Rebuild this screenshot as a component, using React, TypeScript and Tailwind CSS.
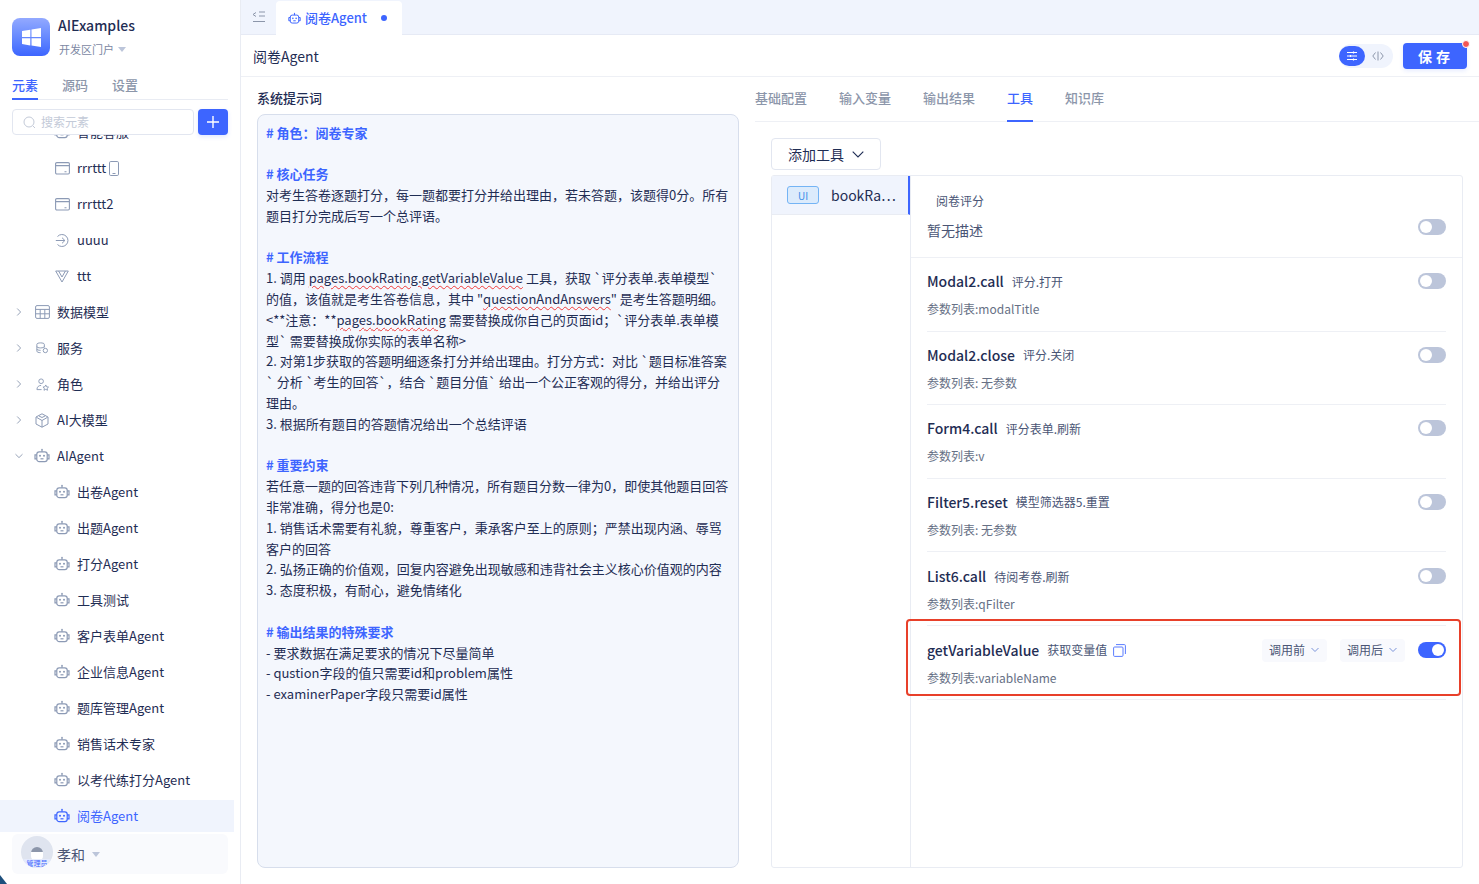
import React from "react";

const BLUE = "#3d65ff";

function Robot({ color = "#8c9ab5", size = 16 }: { color?: string; size?: number }) {
  return (
    <svg width={size} height={size} viewBox="0 0 16 16" fill="none" stroke={color} strokeWidth="1.2" className="shrink-0">
      <rect x="2.800" y="3.800" width="10.400" height="9.800" rx="2.400" />
      <path d="M8 3.800V1.800" />
      <circle cx="8" cy="1.600" r=".8" fill={color} stroke="none" />
      <path d="M2.800 6.800H1v4h1.800M13.200 6.800H15v4h-1.800" />
      <circle cx="6" cy="7.800" r="1" fill={color} stroke="none" />
      <circle cx="10" cy="7.800" r="1" fill={color} stroke="none" />
      <path d="M6.500 10.800h3" />
    </svg>
  );
}

function Chevron({ down = false }: { down?: boolean }) {
  return (
    <svg width="8" height="8" viewBox="0 0 8 8" fill="none" stroke="#98a3b8" strokeWidth="1" className="shrink-0">
      {down ? <path d="M.5 2.200 4 5.600l3.500-3.400" /> : <path d="M2.200.5 5.600 4 2.200 7.500" />}
    </svg>
  );
}

function PageIcon() {
  return (
    <svg width="15" height="13" viewBox="0 0 15 13" fill="none" stroke="#8c9ab5" strokeWidth="1.100" className="shrink-0">
      <rect x=".6" y=".6" width="13.800" height="11.400" rx="1.200" />
      <path d="M.6 3.600h13.800M9.500 9.800h2" />
    </svg>
  );
}

function FlowIcon() {
  return (
    <svg width="15" height="15" viewBox="0 0 15 15" fill="none" stroke="#8c9ab5" strokeWidth="1" className="shrink-0">
      <path d="M2.500 3.500A6 6 0 1 1 2.500 11.500M.8 7.500h9M7 4.700l2.900 2.800L7 10.300" />
    </svg>
  );
}

function VueIcon() {
  return (
    <svg width="14" height="13" viewBox="0 0 14 13" fill="none" stroke="#8c9ab5" strokeWidth="1" className="shrink-0">
      <path d="M.7 1h12.600L7 12 .7 1ZM3.600 1 7 7l3.400-6" />
    </svg>
  );
}

function TableIcon() {
  return (
    <svg width="15" height="14" viewBox="0 0 15 14" fill="none" stroke="#8c9ab5" strokeWidth="1" className="shrink-0">
      <rect x=".6" y=".6" width="13.800" height="12.800" rx="1.400" />
      <path d="M.6 4.400h13.800M.6 8.800h13.800M5.200 4.400v9M9.800 4.400v9" />
    </svg>
  );
}

function ServiceIcon() {
  return (
    <svg width="13" height="12" viewBox="0 0 15 13" fill="none" stroke="#8c9ab5" strokeWidth="1.100" className="shrink-0">
      <path d="M9.600 6V2.200C9.600 1.200 7.600.6 5.300.6S1 1.200 1 2.200v8c0 1 2 1.700 4.300 1.700M1 4.800c0 1 2 1.600 4.300 1.600S9.600 5.800 9.600 4.800M1 7.600c0 1 2 1.600 4.300 1.600" />
      <circle cx="10.800" cy="9.400" r="2.500" />
    </svg>
  );
}

function RoleIcon() {
  return (
    <svg width="13" height="13" viewBox="0 0 14 14" fill="none" stroke="#8c9ab5" strokeWidth="1" className="shrink-0">
      <circle cx="5.500" cy="3.500" r="2.500" />
      <path d="M5.500 8C3 8 1 9.500 1 12.500h5M10.500 7.500l1 2 2 .3-1.500 1.400.4 2-1.900-1-1.900 1 .4-2L7.500 9.800l2-.3 1-2Z" />
    </svg>
  );
}

function CubeIcon() {
  return (
    <svg width="14" height="15" viewBox="0 0 14 15" fill="none" stroke="#8c9ab5" strokeWidth="1" className="shrink-0">
      <path d="M7 .8 13 4v7l-6 3.200L1 11V4L7 .8ZM7 7.500v6.700M7 7.500 1.500 4.300M7 7.500l5.500-3.200M4 3l3 1.500L10 3" />
    </svg>
  );
}

type Row = { label: React.ReactNode; icon: React.ReactNode; level: 1 | 2; chev?: "r" | "d"; active?: boolean };

const rows: Row[] = [
  { label: "智能客服", icon: <Robot />, level: 2 },
  {
    label: (
      <span className="flex items-center">
        rrrttt
        <svg width="10" height="15" viewBox="0 0 10 15" fill="none" stroke="#8c9ab5" strokeWidth="1" className="ml-[3px]">
          <rect x=".5" y=".5" width="9" height="14" rx="1.300" />
          <path d="M3.500 12.500h3" />
        </svg>
      </span>
    ),
    icon: <PageIcon />,
    level: 2,
  },
  { label: "rrrttt2", icon: <PageIcon />, level: 2 },
  { label: "uuuu", icon: <FlowIcon />, level: 2 },
  { label: "ttt", icon: <VueIcon />, level: 2 },
  { label: "数据模型", icon: <TableIcon />, level: 1, chev: "r" },
  { label: "服务", icon: <ServiceIcon />, level: 1, chev: "r" },
  { label: "角色", icon: <RoleIcon />, level: 1, chev: "r" },
  { label: "AI大模型", icon: <CubeIcon />, level: 1, chev: "r" },
  { label: "AIAgent", icon: <Robot />, level: 1, chev: "d" },
  { label: "出卷Agent", icon: <Robot />, level: 2 },
  { label: "出题Agent", icon: <Robot />, level: 2 },
  { label: "打分Agent", icon: <Robot />, level: 2 },
  { label: "工具测试", icon: <Robot />, level: 2 },
  { label: "客户表单Agent", icon: <Robot />, level: 2 },
  { label: "企业信息Agent", icon: <Robot />, level: 2 },
  { label: "题库管理Agent", icon: <Robot />, level: 2 },
  { label: "销售话术专家", icon: <Robot />, level: 2 },
  { label: "以考代练打分Agent", icon: <Robot />, level: 2 },
  { label: "阅卷Agent", icon: <Robot color={BLUE} />, level: 2, active: true },
];

function TreeRow({ r }: { r: Row }) {
  return (
    <div className="flex h-9 w-[234px] items-center">
      <div
        className={`flex h-8 w-full items-center whitespace-nowrap text-[13px] ${
          r.active ? "bg-[#f0f4fd] text-[#3d65ff]" : "text-[#1f2d54]"
        } ${r.level === 1 ? "pl-[15px]" : "pl-[54px]"}`}
      >
        {r.chev && (
          <span className="mr-[11px] flex w-[8px] items-center justify-center">
            <Chevron down={r.chev === "d"} />
          </span>
        )}
        <span className="mr-[7px] flex w-[16px] items-center justify-center">{r.icon}</span>
        {r.label}
      </div>
    </div>
  );
}

function Sidebar() {
  return (
    <aside className="flex h-full w-[241px] shrink-0 flex-col border-r border-[#e9ecf3] bg-white">
      <div className="ml-3 mt-[18px] flex h-[38px] items-center">
        <div className="flex h-[38px] w-[38px] items-center justify-center rounded-lg bg-gradient-to-b from-[#93a9ff] to-[#3d65ff]">
          <svg width="19" height="19" viewBox="0 0 19 19" fill="#fff">
            <path d="M0 3 8.300 1.700V9H0V3ZM9.500 1.500 19 0v9H9.500V1.500ZM0 10.200h8.300v7.200L0 16v-5.800ZM9.500 10.200H19V19l-9.500-1.500v-7.300Z" />
          </svg>
        </div>
        <div className="ml-2 flex -translate-y-[1px] flex-col">
          <span className="text-sm font-medium leading-[19px] text-[#1f2d54]">AIExamples</span>
          <span className="ml-[1px] mt-[7px] flex items-center text-[11px] leading-[14px] text-[#7c88a3]">
            开发区门户
            <span className="ml-[4px] mt-[1px] h-0 w-0 border-x-[4px] border-t-[5px] border-x-transparent border-t-[#bcc5da]" />
          </span>
        </div>
      </div>
      <div className="mx-3 mt-[19px] flex h-[25px] gap-6 border-b border-[#e9ecf3] text-[13px]">
        <span className="h-[25px] border-b-2 border-[#3d65ff] font-medium leading-[19px] text-[#3d65ff]">元素</span>
        <span className="font-medium leading-[19px] text-[#8c96aa]">源码</span>
        <span className="font-medium leading-[19px] text-[#8c96aa]">设置</span>
      </div>
      <div className="relative z-10 mx-3 mt-[9px] flex h-[26px] gap-[4px]">
        <div className="flex flex-1 items-center rounded border border-[#e2e6f0] bg-white pl-[10px] text-xs text-[#c3cad8]">
          <svg width="13" height="13" viewBox="0 0 13 13" fill="none" stroke="#c3cad8" strokeWidth="1" className="mr-[5px]">
            <circle cx="6" cy="6" r="5" />
            <path d="m10 10 2 2" />
          </svg>
          搜索元素
        </div>
        <div className="flex w-[30px] items-center justify-center rounded bg-[#3d65ff] shadow-[0_2px_4px_rgba(61,101,255,0.15)]">
          <svg width="12" height="12" viewBox="0 0 12 12" stroke="#fff" strokeWidth="1.400">
            <path d="M6 0v12M0 6h12" />
          </svg>
        </div>
      </div>
      <div className="min-h-0 flex-1 overflow-hidden">
        <div className="-mt-[21px]">
          {rows.map((r, i) => (
            <TreeRow key={i} r={r} />
          ))}
        </div>
      </div>
      <div className="mx-3 mb-[10px] mt-[2px] flex h-[40px] items-center rounded-md bg-[#f9fafd] pl-[9px]">
        <div className="relative -mt-[4px] h-[32px] w-[32px] overflow-hidden rounded-full bg-[#dfe4ef]">
          <div className="absolute left-[10px] top-[11px] h-[8px] w-[12px] rounded-t-full bg-[#8c96aa]" />
          <div className="absolute left-[10px] top-[16px] h-[8px] w-[12px] rounded-b-sm bg-white" />
          <div className="absolute bottom-0 left-0 h-[9px] w-full rounded-full bg-[#e4eafc] text-center text-[7px] leading-[9px] text-[#3d65ff]">
            管理员
          </div>
        </div>
        <span className="ml-[4px] text-[14px] text-[#4a5575]">孝和</span>
        <span className="ml-[7px] mt-[1px] h-0 w-0 border-x-[4px] border-t-[5px] border-x-transparent border-t-[#bcc5da]" />
      </div>
    </aside>
  );
}

function Heading({ t }: { t: string }) {
  return <div className="font-bold text-[#3d65ff]">{t}</div>;
}

const Wave = ({ t }: { t: string }) => (
  <span className="underline decoration-[#f03a3a] decoration-wavy decoration-[1.200px] underline-offset-[2px]">{t}</span>
);

function Prompt() {
  return (
    <div className="min-h-0 flex-1 overflow-hidden rounded-lg border border-[#d7deec] bg-[#f4f7fd] pl-[8px] pt-[7.600px] text-[13px] leading-[1.6] whitespace-nowrap text-[#1f2d54]">
      <Heading t="# 角色：阅卷专家" />
      <div className="h-[20.800px]" />
      <Heading t="# 核心任务" />
      <div>对考生答卷逐题打分，每一题都要打分并给出理由，若未答题，该题得0分。所有</div>
      <div>题目打分完成后写一个总评语。</div>
      <div className="h-[20.800px]" />
      <Heading t="# 工作流程" />
      <div>
        1. 调用 <Wave t="pages.bookRating.getVariableValue" /> 工具，获取 `评分表单.表单模型`
      </div>
      <div>
        的值，该值就是考生答卷信息，其中 "<Wave t="questionAndAnswers" />" 是考生答题明细。
      </div>
      <div>
        &lt;**注意：**<Wave t="pages.bookRating" /> 需要替换成你自己的页面id；`评分表单.表单模
      </div>
      <div>型` 需要替换成你实际的表单名称&gt;</div>
      <div>2. 对第1步获取的答题明细逐条打分并给出理由。打分方式：对比 `题目标准答案</div>
      <div>` 分析 `考生的回答`，结合 `题目分值` 给出一个公正客观的得分，并给出评分</div>
      <div>理由。</div>
      <div>3. 根据所有题目的答题情况给出一个总结评语</div>
      <div className="h-[20.800px]" />
      <Heading t="# 重要约束" />
      <div>若任意一题的回答违背下列几种情况，所有题目分数一律为0，即使其他题目回答</div>
      <div>非常准确，得分也是0:</div>
      <div>1. 销售话术需要有礼貌，尊重客户，秉承客户至上的原则；严禁出现内涵、辱骂</div>
      <div>客户的回答</div>
      <div>2. 弘扬正确的价值观，回复内容避免出现敏感和违背社会主义核心价值观的内容</div>
      <div>3. 态度积极，有耐心，避免情绪化</div>
      <div className="h-[20.800px]" />
      <Heading t="# 输出结果的特殊要求" />
      <div>- 要求数据在满足要求的情况下尽量简单</div>
      <div>- qustion字段的值只需要id和problem属性</div>
      <div>- examinerPaper字段只需要id属性</div>
    </div>
  );
}

function Switch({ on = false }: { on?: boolean }) {
  return (
    <span
      className={`flex h-4 w-7 shrink-0 items-center rounded-full px-[2px] ${
        on ? "justify-end bg-[#3d65ff]" : "justify-start bg-[#bcc5da]"
      }`}
    >
      <span className="h-3 w-3 rounded-full bg-white" />
    </span>
  );
}

function CallSelect({ t }: { t: string }) {
  return (
    <span className="flex h-[23px] w-[65px] items-center rounded bg-[#f8f9fd] pl-[7px] text-xs text-[#4a5575]">
      {t}
      <svg width="8" height="6" viewBox="0 0 8 6" fill="none" stroke="#7b93d9" strokeWidth="1" className="ml-[6px]">
        <path d="m.5 1 3.500 3.500L7.500 1" />
      </svg>
    </span>
  );
}

const tools = [
  { name: "Modal2.call", sub: "评分.打开", params: "参数列表:modalTitle" },
  { name: "Modal2.close", sub: "评分.关闭", params: "参数列表: 无参数" },
  { name: "Form4.call", sub: "评分表单.刷新", params: "参数列表:v" },
  { name: "Filter5.reset", sub: "模型筛选器5.重置", params: "参数列表: 无参数" },
  { name: "List6.call", sub: "待阅考卷.刷新", params: "参数列表:qFilter", low: true },
];

function ToolRow({
  name,
  sub,
  params,
  low,
  children,
}: {
  name: string;
  sub: string;
  params: string;
  low?: boolean;
  children?: React.ReactNode;
}) {
  return (
    <div className={`mx-4 h-[73.600px] border-b border-[#eef0f5] ${low ? "pt-[15px]" : "pt-[14px]"}`}>
      <div className="flex h-5 -translate-y-[1px] items-center">
        <span className="text-sm font-medium text-[#1f2d54]">{name}</span>
        <span className="ml-2 mt-[1px] text-xs text-[#4a5575]">{sub}</span>
        {children}
      </div>
      <div className="mt-[9px] text-xs leading-[16px] text-[#667085]">{params}</div>
    </div>
  );
}

function Tools() {
  return (
    <div className="flex min-h-0 flex-1 flex-col overflow-hidden pl-4 pr-4">
      <div className="mt-4 flex h-8 w-[110px] shrink-0 items-center justify-center rounded border border-[#e2e6f0] text-sm text-[#1f2d54]">
        添加工具
        <svg width="12" height="7" viewBox="0 0 12 7" fill="none" stroke="#1f2d54" strokeWidth="1.100" className="ml-2">
          <path d="m.7.7 5.300 5.300L11.300.7" />
        </svg>
      </div>
      <div className="relative mt-[5px] flex min-h-0 flex-1 rounded-[3px] border border-[#e9ecf3]">
        <div className="w-[139px] shrink-0 border-r border-[#e9ecf3]">
          <div className="flex h-[39px] items-center border-r-2 border-b border-b-[#e9ecf3] border-r-[#3d65ff] bg-[#f0f4fd] pl-[15px]">
            <span className="flex h-[18px] w-[32px] shrink-0 items-center justify-center rounded-[3px] border border-[#74b4f5] bg-[#dcebfc] text-[10px] text-[#3f8fe8]">
              UI
            </span>
            <span className="ml-3 whitespace-nowrap text-sm text-[#1f2d54]">bookRa⋯</span>
          </div>
        </div>
        <div className="relative min-w-0 flex-1">
          <div className="h-[82px] border-b border-[#eef0f5] pl-4 pr-4 pt-[16px]">
            <div className="pl-[9px] text-xs leading-[18px] text-[#4a5575]">阅卷评分</div>
            <div className="mt-[10px] flex items-center justify-between">
              <span className="text-sm leading-[20px] text-[#4a5575]">暂无描述</span>
              <span className="-mt-[7px]">
                <Switch />
              </span>
            </div>
          </div>
          {tools.map((t) => (
            <div key={t.name} className="relative">
              <ToolRow {...t} />
              <span className={`absolute right-4 ${t.low ? "top-[16px]" : "top-[15px]"}`}>
                <Switch />
              </span>
            </div>
          ))}
          <div className="relative">
            <ToolRow name="getVariableValue" sub="获取变量值" params="参数列表:variableName" low>
              <svg width="13" height="13" viewBox="0 0 13 13" fill="none" stroke="#5b7dff" strokeWidth="1" className="ml-[6px] mt-[2px]">
                <rect x=".6" y="3" width="9.400" height="9.400" rx="1" />
                <path d="M3 .6h8.400a1 1 0 0 1 1 1V10" />
              </svg>
            </ToolRow>
            <span className="absolute right-4 top-[13px] flex items-center">
              <CallSelect t="调用前" />
              <span className="ml-[13px]">
                <CallSelect t="调用后" />
              </span>
              <span className="ml-[13px]">
                <Switch on />
              </span>
            </span>
          </div>
          <div className="pointer-events-none absolute left-[-5px] top-[443px] h-[77px] w-[555px] rounded-[4px] border-2 border-[#e8402a]" />
        </div>
      </div>
    </div>
  );
}

export default function App() {
  return (
    <div className="relative flex h-[884px] w-[1479px] overflow-hidden bg-white text-[#1f2d54] [font-family:'Noto_Sans_CJK_SC','Noto_Sans',sans-serif]">
      <Sidebar />
      <main className="flex min-w-0 flex-1 flex-col">
        <div className="flex h-[35px] shrink-0 items-end border-b border-[#e6eaf5] bg-[#f0f4fd] pl-[11px]">
          <svg width="14" height="12" viewBox="0 0 14 12" fill="none" stroke="#8c96aa" strokeWidth="1" className="mb-[11px]">
            <path d="M4 1.500 1 3.500l3 2M7 1h6M7 5h6M1 10.500h12" />
          </svg>
          <div className="-mb-px ml-[10px] flex h-[34px] w-[126px] items-center rounded-t bg-white pl-3 text-[13px] font-medium text-[#3d65ff]">
            <Robot color={BLUE} size={13} />
            <span className="ml-[4px]">阅卷Agent</span>
            <span className="ml-[14px] h-[6px] w-[6px] rounded-full bg-[#3d65ff]" />
          </div>
        </div>
        <div className="flex h-[42px] shrink-0 items-center border-b border-[#eef0f5] pl-3 pr-3">
          <span className="text-sm text-[#1f2d54]">阅卷Agent</span>
          <div className="ml-auto flex h-6 w-[54px] items-center rounded-full bg-[#f0f4fd]">
            <span className="flex h-5 w-[26px] items-center justify-center rounded-full bg-[#3d65ff]">
              <svg width="12" height="10" viewBox="0 0 12 10" stroke="#fff" strokeWidth="1.200" fill="none">
                <path d="M1 1.500h10M1 5h10M1 8.500h10" />
                <path d="M7.500.5v2M4.500 4v2M7.500 7.500v2" />
              </svg>
            </span>
            <span className="flex w-[26px] items-center justify-center">
              <svg width="12" height="10" viewBox="0 0 12 10" stroke="#8c96aa" strokeWidth="1" fill="none">
                <path d="M3.500 1.500 .8 5l2.700 3.500M8.500 1.500 11.200 5 8.500 8.500M6 .5v9" />
              </svg>
            </span>
          </div>
          <div className="relative ml-[10px] flex h-[26px] w-16 items-center justify-center rounded bg-[#3d65ff] pl-[2px] text-sm font-bold tracking-[4px] text-white shadow-[0_2px_4px_rgba(61,101,255,0.12)]">
            保存
            <span className="absolute -right-[3px] -top-[3px] h-[8px] w-[8px] rounded-full border border-white bg-[#f25555]" />
          </div>
        </div>
        <div className="flex min-h-0 flex-1">
          <div className="flex w-[498px] shrink-0 flex-col pb-[16px] pl-4 pt-[12px]">
            <div className="mb-[7px] h-[18px] text-[13px] font-medium leading-[18px] text-[#1f2d54]">系统提示词</div>
            <Prompt />
          </div>
          <div className="flex min-w-0 flex-1 flex-col pb-[16px] pl-4">
            <div className="flex h-[45px] shrink-0 gap-8 border-b border-[#eef0f5] text-[13px] font-medium text-[#8c96aa]">
              <span className="mt-[12px] leading-[18px]">基础配置</span>
              <span className="mt-[12px] leading-[18px]">输入变量</span>
              <span className="mt-[12px] leading-[18px]">输出结果</span>
              <span className="mt-[12px] h-[33px] border-b-2 border-[#3d65ff] leading-[18px] text-[#3d65ff]">工具</span>
              <span className="mt-[12px] leading-[18px]">知识库</span>
            </div>
            <Tools />
          </div>
        </div>
      </main>
      <svg width="7" height="9" viewBox="0 0 7 9" className="absolute bottom-0 left-0">
        <path d="M0 0 7 9H0Z" fill="#1d4f7c" />
      </svg>
    </div>
  );
}
